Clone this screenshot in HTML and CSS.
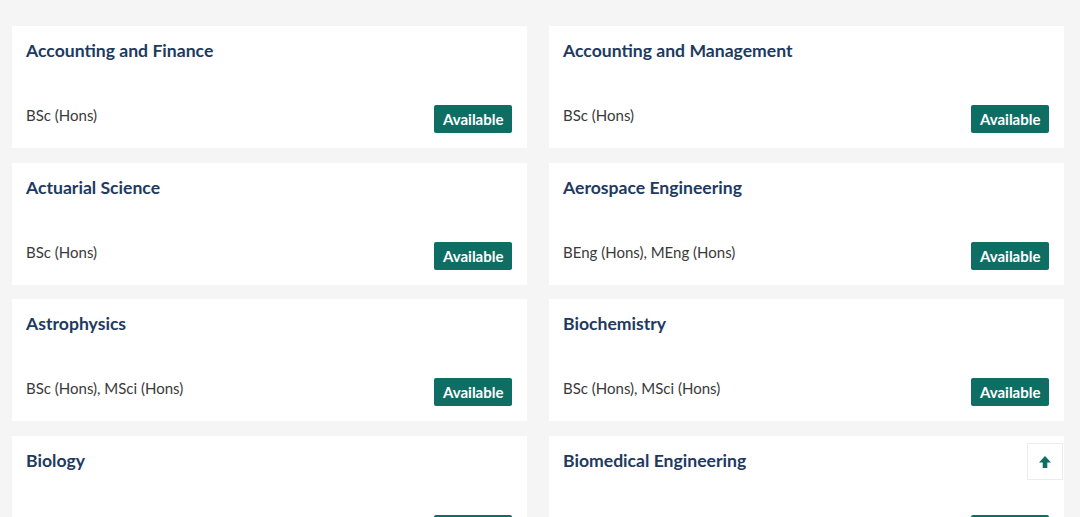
FILE: index.html
```html
<!DOCTYPE html>
<html lang="en">
<head>
<meta charset="utf-8">
<title>Courses</title>
<link rel="stylesheet" href="styles.css">
</head>
<body>
<main class="grid">
  <article class="card">
    <h2 class="title">Accounting and Finance</h2>
    <div class="foot"><span class="award">BSc (Hons)</span><span class="badge">Available</span></div>
  </article>
  <article class="card">
    <h2 class="title">Accounting and Management</h2>
    <div class="foot"><span class="award">BSc (Hons)</span><span class="badge">Available</span></div>
  </article>
  <article class="card">
    <h2 class="title">Actuarial Science</h2>
    <div class="foot"><span class="award">BSc (Hons)</span><span class="badge">Available</span></div>
  </article>
  <article class="card">
    <h2 class="title">Aerospace Engineering</h2>
    <div class="foot"><span class="award">BEng (Hons), MEng (Hons)</span><span class="badge">Available</span></div>
  </article>
  <article class="card">
    <h2 class="title">Astrophysics</h2>
    <div class="foot"><span class="award">BSc (Hons), MSci (Hons)</span><span class="badge">Available</span></div>
  </article>
  <article class="card">
    <h2 class="title">Biochemistry</h2>
    <div class="foot"><span class="award">BSc (Hons), MSci (Hons)</span><span class="badge">Available</span></div>
  </article>
  <article class="card">
    <h2 class="title">Biology</h2>
    <div class="foot"><span class="award">BSc (Hons)</span><span class="badge">Available</span></div>
  </article>
  <article class="card">
    <h2 class="title">Biomedical Engineering</h2>
    <div class="foot"><span class="award">BEng (Hons), MEng (Hons)</span><span class="badge">Available</span></div>
  </article>
</main>
<a class="totop" href="#top" aria-label="Back to top">
  <svg width="14" height="14" viewBox="0 0 14 14"><path d="M7 1 L13 7.5 H9.3 V13 H4.7 V7.5 H1 Z" fill="#0e6e63"/></svg>
</a>
</body>
</html>
```
FILE: styles.css
```css
html, body {
  margin: 0;
  padding: 0;
  background: #f5f5f5;
  overflow: hidden;
  height: 517px;
}
body {
  font-family: "Lato", "Open Sans", sans-serif;
  color: #333;
}
.grid {
  display: grid;
  grid-template-columns: 515px 515px;
  column-gap: 22px;
  row-gap: 14.67px;
  padding: 26px 0 0 12px;
}
.card {
  background: #fff;
  height: 122px;
  box-sizing: border-box;
  padding: 14px 15px 15px 14px;
  display: flex;
  flex-direction: column;
  justify-content: space-between;
}
.title {
  margin: 0;
  font-size: 17.6px;
  line-height: 22px;
  font-weight: 700;
  color: #1e3a5f;
}
.foot {
  display: flex;
  justify-content: space-between;
  align-items: flex-end;
}
.award {
  font-size: 15px;
  line-height: 20px;
  color: #3a3a3a;
  margin-bottom: 8px;
}
.badge {
  background: #0e6e63;
  color: #fff;
  font-weight: 700;
  font-size: 15px;
  line-height: 28px;
  height: 28px;
  padding: 0 8.5px;
  border-radius: 2px;
}
.totop {
  position: fixed;
  left: 1027px;
  top: 443px;
  width: 36px;
  height: 37px;
  box-sizing: border-box;
  background: #fff;
  border: 1px solid #ececec;
  display: flex;
  align-items: center;
  justify-content: center;
}
```
